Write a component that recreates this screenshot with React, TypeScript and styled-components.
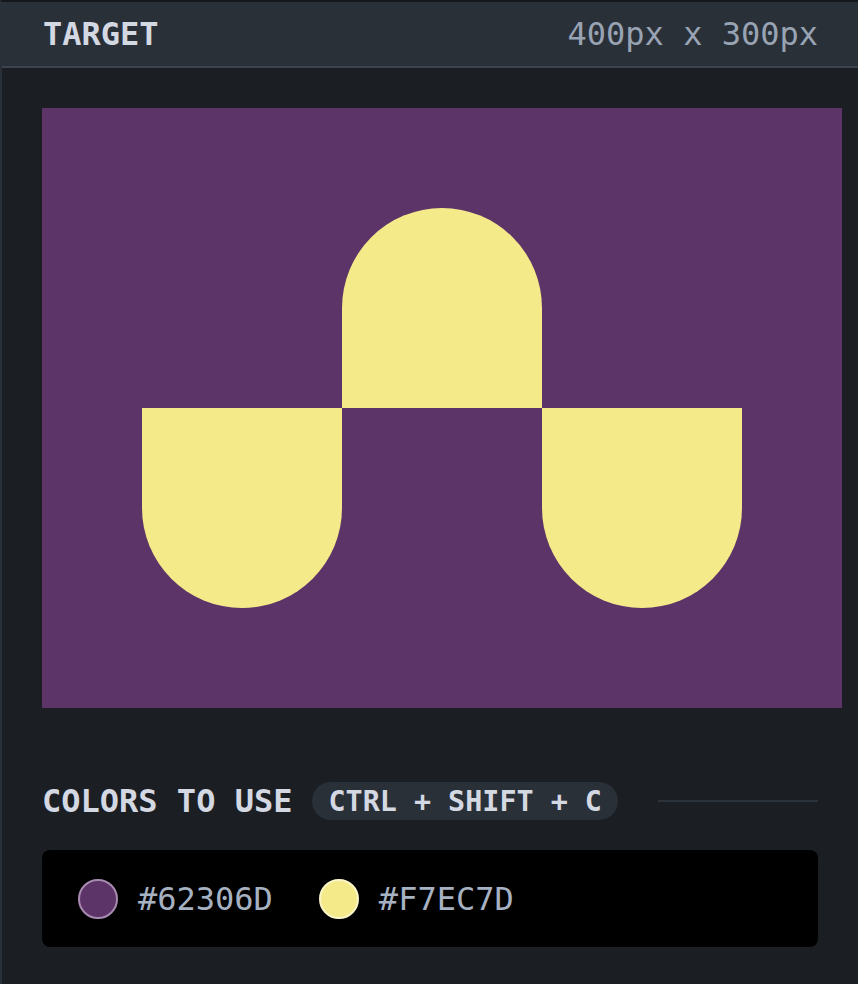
import React from 'react';
import styled, {createGlobalStyle} from 'styled-components';

const GlobalStyle = createGlobalStyle`
  html, body {
    margin: 0;
    padding: 0;
    background: #1b1f23;
  }
  body {
    font-family: "DejaVu Sans Mono", "Liberation Mono", monospace;
  }
`;

const Panel = styled.div`
  width: 858px;
  height: 984px;
  box-sizing: border-box;
  border-top: 2px solid #14171b;
  border-left: 2px solid #2a3038;
  background: #1b1f23;
  overflow: hidden;
`;

const Header = styled.div`
  height: 64px;
  display: flex;
  align-items: center;
  justify-content: space-between;
  padding: 0 40px 0 43px;
  margin-left: -2px;
  background: #2a3038;
  border-bottom: 2px solid #3a434e;
`;

const Title = styled.h2`
  margin: 0;
  font-size: 32px;
  font-weight: bold;
  color: #d3d8e2;
  white-space: nowrap;
`;

const Size = styled.span`
  font-size: 32px;
  color: #98a3b3;
`;

const Body = styled.div`
  padding: 40px 40px 0 40px;
`;

const Canvas = styled.div`
  width: 800px;
  height: 600px;
  background: #5d3468;
  display: grid;
  grid-template-columns: 100px 200px 200px 200px 100px;
  grid-template-rows: 100px 200px 200px 100px;
`;

const Half = styled.div<{$col: number; $row: number; $up?: boolean}>`
  grid-column: ${p => p.$col};
  grid-row: ${p => p.$row};
  background: #f4ea8a;
  border-radius: ${p => (p.$up ? '100px 100px 0 0' : '0 0 100px 100px')};
`;

const SectionHead = styled.div`
  display: flex;
  align-items: center;
  margin-top: 74px;
  height: 38px;
`;

const Chip = styled.span`
  margin-left: 20px;
  height: 38px;
  padding: 0 16px;
  border-radius: 19px;
  background: #2a3038;
  color: #d3d8e2;
  font-size: 28.4px;
  font-weight: bold;
  white-space: nowrap;
  display: flex;
  align-items: center;
`;

const Rule = styled.div`
  flex: 1;
  margin-left: 40px;
  height: 2px;
  background: #2c323a;
`;

const Swatches = styled.div`
  margin-top: 30px;
  height: 97px;
  background: #000;
  border-radius: 8px;
  display: flex;
  align-items: center;
  padding: 0 36px;
  gap: 46px;
`;

const Swatch = styled.div`
  display: flex;
  align-items: center;
  gap: 20px;
`;

const Dot = styled.span<{$fill: string; $ring: string}>`
  width: 36px;
  height: 36px;
  border-radius: 50%;
  background: ${p => p.$fill};
  border: 2px solid ${p => p.$ring};
`;

const Hex = styled.span`
  font-size: 32px;
  color: #a6b1c2;
`;

export default function App() {
  return (
    <Panel>
      <GlobalStyle/>
      <Header>
        <Title>TARGET</Title>
        <Size>400px x 300px</Size>
      </Header>
      <Body>
        <Canvas>
          <Half $col={3} $row={2} $up/>
          <Half $col={2} $row={3}/>
          <Half $col={4} $row={3}/>
        </Canvas>
        <SectionHead>
          <Title>COLORS TO USE</Title>
          <Chip>CTRL + SHIFT + C</Chip>
          <Rule/>
        </SectionHead>
        <Swatches>
          <Swatch>
            <Dot $fill="#5d3468" $ring="#a88bb0"/>
            <Hex>#62306D</Hex>
          </Swatch>
          <Swatch>
            <Dot $fill="#f4ea8a" $ring="#fbf6c8"/>
            <Hex>#F7EC7D</Hex>
          </Swatch>
        </Swatches>
      </Body>
    </Panel>
  );
}
